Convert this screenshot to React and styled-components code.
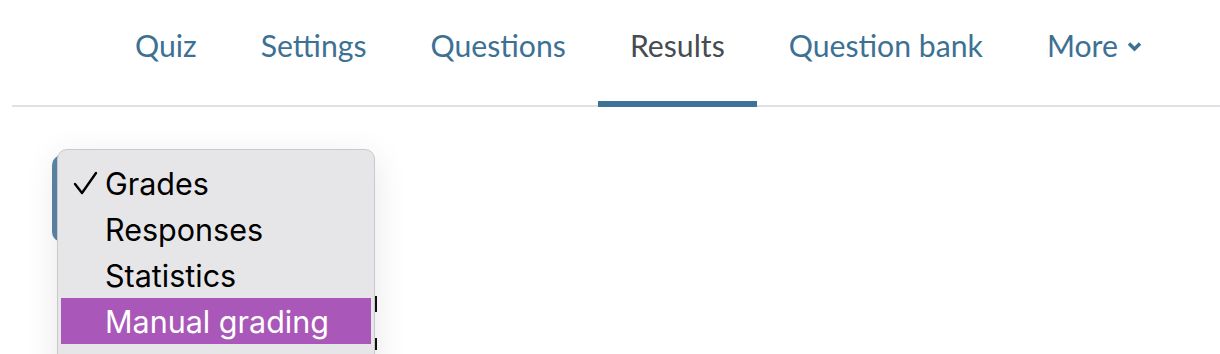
import React from "react";
import styled, { createGlobalStyle } from "styled-components";

const Global = createGlobalStyle`
  html, body { margin: 0; padding: 0; background: #fff; }
  body { width: 1220px; height: 354px; overflow: hidden; }
`;

const Page = styled.div`
  position: relative;
  width: 1220px;
  height: 354px;
  overflow: hidden;
`;

const Nav = styled.nav`
  display: flex;
  margin-left: 12px;
  padding-left: 91px;
  height: 105px;
  border-bottom: 2px solid #dee2e6;
`;

const Tab = styled.a`
  display: flex;
  align-items: center;
  gap: 9px;
  box-sizing: border-box;
  height: 107px;
  padding: 0 32px 12px;
  margin-bottom: -2px;
  font-family: Lato, "Open Sans", sans-serif;
  font-size: 30.2px;
  color: ${(p) => (p.$active ? "#464c52" : "#3d7193")};
  border-bottom: 6px solid ${(p) => (p.$active ? "#3d7396" : "transparent")};
  text-decoration: none;
  white-space: nowrap;
`;

const Chevron = styled.svg`
  width: 15px;
  height: 11px;
  margin-top: 4px;
`;

const Body = styled.div`
  padding: 48px 0 0 52px;
`;

const SelectButton = styled.div`
  width: 200px;
  height: 87px;
  border-radius: 10px;
  background: #5a86a6;
`;

const Menu = styled.ul`
  position: absolute;
  left: 57px;
  top: 149px;
  width: 318px;
  height: 240px;
  margin: 0;
  padding: 10px 3px;
  box-sizing: border-box;
  list-style: none;
  background: #e6e6e8;
  border: 1px solid #c9c9cc;
  border-radius: 10px;
  box-shadow: 0 8px 34px rgba(0, 0, 0, 0.1);
  font-family: Inter, "Liberation Sans", sans-serif;
  font-size: 30.5px;
  color: #000;
`;

const Item = styled.li`
  display: flex;
  align-items: center;
  height: 46px;
  padding-left: 12px;
  background: ${(p) => (p.$highlight ? "#a957b8" : "transparent")};
  color: ${(p) => (p.$highlight ? "#fff" : "#000")};
`;

const CheckSlot = styled.span`
  display: flex;
  align-items: center;
  width: 32px;
  flex: none;
`;

const Backdrop = styled.div`
  position: absolute;
  left: 375px;
  top: 272px;
  width: 32px;
  height: 82px;
  background: #fff;
`;

const Mark = styled.span`
  display: block;
  width: 2px;
  background: #111;
  margin-top: ${(p) => p.$top}px;
  height: ${(p) => p.$h}px;
`;

const tabs = ["Quiz", "Settings", "Questions", "Results", "Question bank"];

export default function App() {
  return (
    <Page>
      <Global />
      <Nav>
        {tabs.map((t) => (
          <Tab key={t} $active={t === "Results"}>
            {t}
          </Tab>
        ))}
        <Tab>
          More
          <Chevron viewBox="0 0 15 11">
            <path d="M2 2.5 L7.5 8 L13 2.5" fill="none" stroke="#3d7193" strokeWidth="3.4" />
          </Chevron>
        </Tab>
      </Nav>
      <Body>
        <SelectButton />
      </Body>
      <Backdrop>
        <Mark $top={24} $h={16} />
        <Mark $top={26} $h={12} />
      </Backdrop>
      <Menu>
        <Item>
          <CheckSlot>
            <svg width="25" height="25" viewBox="0 0 25 25">
              <path d="M2 13 L9 22 L23 2" fill="none" stroke="#000" strokeWidth="2.4" strokeLinecap="round" strokeLinejoin="round" />
            </svg>
          </CheckSlot>
          Grades
        </Item>
        <Item>
          <CheckSlot />
          Responses
        </Item>
        <Item>
          <CheckSlot />
          Statistics
        </Item>
        <Item $highlight>
          <CheckSlot />
          Manual grading
        </Item>
      </Menu>
    </Page>
  );
}
